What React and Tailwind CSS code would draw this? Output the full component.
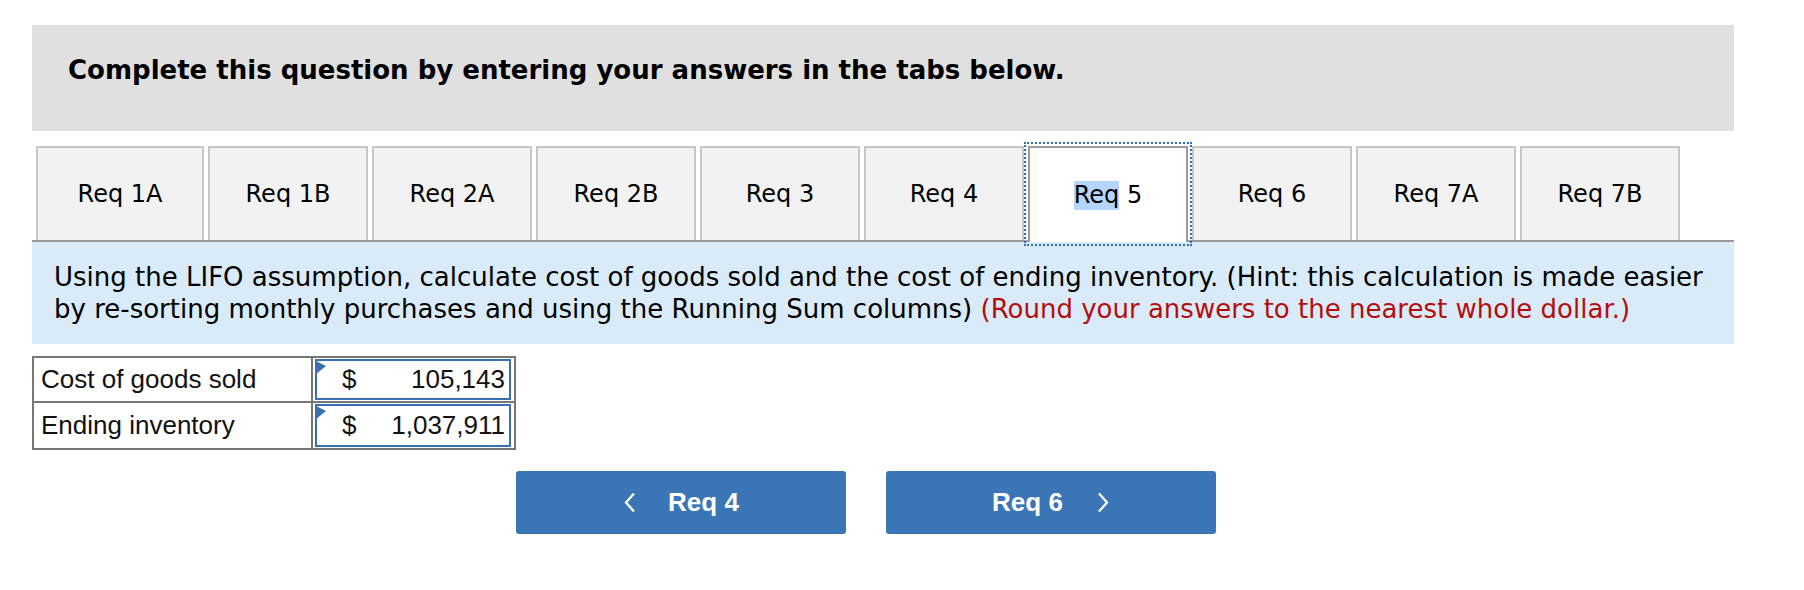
import React from "react";

const TABS = ["Req 1A", "Req 1B", "Req 2A", "Req 2B", "Req 3", "Req 4", "Req 5", "Req 6", "Req 7A", "Req 7B"];
const ACTIVE = "Req 5";

const verdana = { fontFamily: '"DejaVu Sans", Verdana, sans-serif' };
const arial = { fontFamily: '"Liberation Sans", Arial, sans-serif' };

function Chevron({ dir }) {
  return (
    <svg width="13" height="21" viewBox="0 0 13 21" className="shrink-0">
      <polyline
        points={dir === "left" ? "11,1.5 3,10.5 11,19.5" : "2,1.5 10,10.5 2,19.5"}
        fill="none"
        stroke="white"
        strokeWidth="2.3"
      />
    </svg>
  );
}

function Tab({ label, first }) {
  const on = label === ACTIVE;
  if (on) {
    return (
      <div className="relative z-10 -mb-[2px] h-[96px] w-[160px] shrink-0 bg-white border-2 border-b-0 border-[#9a9a9a] outline-2 outline-dotted outline-[#2f6fc0] outline-offset-[2px] flex items-center justify-center text-[24px] text-black">
        <span className="bg-[#b4d5fe] leading-[29px]">Req</span>
        <span className="whitespace-pre"> 5</span>
      </div>
    );
  }
  return (
    <div
      className={`h-[94px] ${first ? "w-[168px]" : "w-[160px]"} shrink-0 bg-[#f2f2f2] border-2 border-b-0 border-[#c6c6c6] flex items-center justify-center text-[24px] text-black`}
    >
      {label}
    </div>
  );
}

export default function App() {
  return (
    <div className="bg-white w-[1804px] h-[590px] pl-[32px] pt-[25px]">
      <div className="w-[1702px]">
        {/* header */}
        <div className="h-[106px] bg-[#e0e0e0] pl-[36px] pt-[30px]" style={verdana}>
          <p className="text-[26px] leading-[31px] font-bold text-black">
            Complete this question by entering your answers in the tabs below.
          </p>
        </div>

        {/* tabs */}
        <div className="mt-[15px] flex items-start gap-[4px] pl-[4px] border-b-2 border-[#9a9a9a]" style={verdana}>
          {TABS.map((t, i) => (
            <Tab key={t} label={t} first={i === 0} />
          ))}
        </div>

        {/* instructions */}
        <div className="bg-[#d9eaf8] pl-[22px] pt-[19px] pb-[19px] text-[26px] leading-[32px] text-black whitespace-nowrap" style={verdana}>
          Using the LIFO assumption, calculate cost of goods sold and the cost of ending inventory. (Hint: this calculation is made easier
          <br />
          by re-sorting monthly purchases and using the Running Sum columns){" "}
          <span className="text-[#b50d0d]">(Round your answers to the nearest whole dollar.)</span>
        </div>

        {/* answer table */}
        <div className="mt-[12px] w-[484px] border-2 border-[#777777] text-[26px] text-[#111]" style={arial}>
          {[
            ["Cost of goods sold", "105,143"],
            ["Ending inventory", "1,037,911"],
          ].map(([label, val], i) => (
            <div key={label} className={`flex h-[45px] ${i === 0 ? "border-b-2 border-[#777777]" : ""}`}>
              <div className="w-[279px] border-r-2 border-[#777777] pl-[7px] flex items-center">{label}</div>
              <div className="relative flex-1 pl-[2px] pr-[3px] py-[1px]">
                <div className="h-full border-2 border-[#3a6fb0] flex items-center justify-between pl-[25px] pr-[4px]">
                  <span>$</span>
                  <span>{val}</span>
                </div>
                <svg width="10" height="13" viewBox="0 0 10 13" className="absolute left-[3px] top-[3px]">
                  <polygon points="0,0 10,5 0,13" fill="#3a6fb0" />
                </svg>
              </div>
            </div>
          ))}
        </div>

        {/* nav buttons */}
        <div className="mt-[21px] ml-[484px] flex gap-[40px]" style={arial}>
          <button className="w-[330px] h-[63px] rounded-[3px] bg-[#3a76b6] text-white font-bold text-[26px] flex items-center justify-center gap-[32px]">
            <Chevron dir="left" />
            <span>Req 4</span>
          </button>
          <button className="w-[330px] h-[63px] rounded-[3px] bg-[#3a76b6] text-white font-bold text-[26px] flex items-center justify-center gap-[34px]">
            <span>Req 6</span>
            <Chevron dir="right" />
          </button>
        </div>
      </div>
    </div>
  );
}
